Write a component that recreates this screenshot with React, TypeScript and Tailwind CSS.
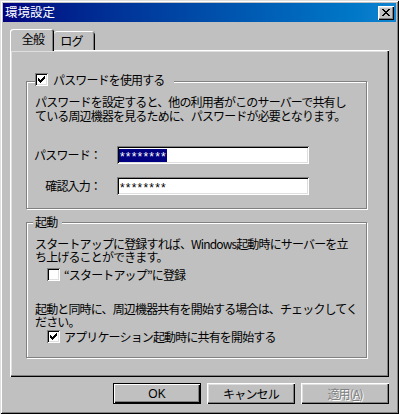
import React from 'react'

const CHECK = [
  '......#',
  '.....##',
  '#...###',
  '##.###.',
  '#####..',
  '.###...',
  '..#....',
]

const CLOSE = [
  '##....##',
  '.##..##.',
  '..####..',
  '...##...',
  '..####..',
  '.##..##.',
  '##....##',
]

function Pixels({ rows, color = '#000' }: { rows: string[]; color?: string }) {
  const w = rows[0].length
  const h = rows.length
  return (
    <svg width={w} height={h} viewBox={`0 0 ${w} ${h}`} shapeRendering="crispEdges">
      {rows.flatMap((row, y) =>
        row.split('').map((c, x) =>
          c === '#' ? <rect key={`${x}-${y}`} x={x} y={y} width={1} height={1} fill={color} /> : null
        )
      )}
    </svg>
  )
}

function Checkbox({ checked }: { checked?: boolean }) {
  return (
    <span className="w-[13px] h-[13px] shrink-0 bg-white flex items-center justify-center shadow-[inset_1px_1px_0_#808080,inset_-1px_-1px_0_#fff,inset_2px_2px_0_#000,inset_-2px_-2px_0_#dfdfdf]">
      {checked && <Pixels rows={CHECK} />}
    </span>
  )
}

// one row per line of the label
function Lines({ lines, lh }: { lines: string[]; lh: string }) {
  return (
    <div className="flex flex-col">
      {lines.map((l) => (
        <div key={l} className={`${lh} whitespace-nowrap`}>
          {l}
        </div>
      ))}
    </div>
  )
}

const raised =
  'shadow-[inset_1px_1px_0_#fff,inset_-1px_-1px_0_#000,inset_-2px_-2px_0_#808080,inset_2px_2px_0_#dfdfdf]'

const sunken =
  'shadow-[inset_1px_1px_0_#808080,inset_-1px_-1px_0_#fff,inset_2px_2px_0_#000,inset_-2px_-2px_0_#dfdfdf]'

export default function App() {
  return (
    <div className="w-[399px] h-[414px] bg-[#c0c0c0] p-[3px] flex flex-col font-['Noto_Sans_CJK_JP','Noto_Sans',sans-serif] text-[12px] tracking-[-0.85px] text-black shadow-[inset_1px_1px_0_#dfdfdf,inset_-1px_-1px_0_#000,inset_2px_2px_0_#fff,inset_-2px_-2px_0_#808080]">
      {/* TITLE */}
      <div className="h-[19px] shrink-0 flex items-center justify-between bg-gradient-to-r from-[#000080] to-[#1084d0] pl-[2px] pr-[2px]">
        <span className="text-white tracking-normal leading-none text-[12.5px]">環境設定</span>
        <span className={`w-[16px] h-[14px] bg-[#c0c0c0] flex items-center justify-center ${raised}`}>
          <Pixels rows={CLOSE} />
        </span>
      </div>

      {/* TABS */}
      <div className="mt-[7px] mx-[7px] flex flex-col">
        <div className="h-[21px] flex items-end relative z-10">
          <div className="w-[44px] h-[22px] -mb-[1px] bg-[#c0c0c0] rounded-t-[3px] flex justify-center pt-[3px] shadow-[inset_1px_1px_0_#fff,inset_-1px_0_0_#000,inset_-2px_0_0_#808080]">
            <span className="leading-[14px] pl-[2px]">全般</span>
          </div>
          <div className="w-[41px] h-[19px] bg-[#c0c0c0] rounded-t-[3px] flex justify-center pt-[3px] shadow-[inset_0_1px_0_#fff,inset_-1px_0_0_#000,inset_-2px_0_0_#808080]">
            <span className="leading-[14px] pr-[6px]">ログ</span>
          </div>
        </div>

        {/* PANEL */}
        <div className={`h-[327px] pl-[16px] pr-[22px] pt-[31px] flex flex-col ${raised}`}>
          {/* PASSWORD GROUP */}
          <div className="h-[128px] border border-[#808080] shadow-[inset_1px_1px_0_#fff,1px_1px_0_#fff] flex flex-col">
            <div className="-mt-[9px] ml-[8px] self-start flex items-center gap-[5px] bg-[#c0c0c0] pr-[9px] h-[13px]">
              <Checkbox checked />
              <span className="leading-[13px] whitespace-nowrap">パスワードを使用する</span>
            </div>
            <div className="mt-[9px] ml-[8px]">
              <Lines
                lh="h-[14px] leading-[14px]"
                lines={[
                  'パスワードを設定すると、他の利用者がこのサーバーで共有し',
                  'ている周辺機器を見るために、パスワードが必要となります。',
                ]}
              />
            </div>
            <div className="mt-[23px] flex items-center">
              <span className="w-[90px] pr-[16px] text-right whitespace-nowrap">パスワード：</span>
              <div className={`w-[192px] h-[18px] bg-white flex items-center pl-[2px] ${sunken}`}>
                <span className="bg-[#000080] text-white h-[13px] flex items-center font-['Liberation_Sans',sans-serif] text-[12px] tracking-[1.2px] leading-none pt-[3px] pl-[1px]">
                  ********
                </span>
              </div>
            </div>
            <div className="mt-[13px] flex items-center">
              <span className="w-[90px] pr-[16px] text-right whitespace-nowrap">確認入力：</span>
              <div className={`w-[192px] h-[18px] bg-white flex items-center pl-[2px] ${sunken}`}>
                <span className="h-[13px] flex items-center font-['Liberation_Sans',sans-serif] text-[12px] tracking-[1.2px] leading-none pt-[3px] pl-[1px]">
                  ********
                </span>
              </div>
            </div>
          </div>

          {/* STARTUP GROUP */}
          <div className="mt-[13px] h-[136px] border border-[#808080] shadow-[inset_1px_1px_0_#fff,1px_1px_0_#fff] flex flex-col">
            <div className="-mt-[8px] ml-[6px] self-start bg-[#c0c0c0] pl-[2px] pr-[5px] h-[14px] flex items-center">
              <span className="leading-[14px]">起動</span>
            </div>
            <div className="mt-[8px] ml-[8px]">
              <Lines
                lh="h-[13px] leading-[13px]"
                lines={[
                  'スタートアップに登録すれば、Windows起動時にサーバーを立',
                  'ち上げることができます。',
                ]}
              />
            </div>
            <div className="mt-[5px] ml-[20px] flex items-center gap-[4px] h-[13px]">
              <Checkbox />
              <span className="leading-[13px] whitespace-nowrap">“スタートアップ”に登録</span>
            </div>
            <div className="mt-[21px] ml-[8px]">
              <Lines
                lh="h-[13px] leading-[13px]"
                lines={[
                  '起動と同時に、周辺機器共有を開始する場合は、チェックしてく',
                  'ださい。',
                ]}
              />
            </div>
            <div className="mt-[2px] ml-[20px] flex items-center gap-[4px] h-[13px]">
              <Checkbox checked />
              <span className="leading-[13px] whitespace-nowrap">アプリケーション起動時に共有を開始する</span>
            </div>
          </div>
        </div>
      </div>

      {/* BUTTONS */}
      <div className="mt-[6px] mr-[7px] flex justify-end gap-[6px]">
        <button className="w-[88px] h-[21px] bg-[#c0c0c0] border border-black flex items-center justify-center shadow-[inset_1px_1px_0_#fff,inset_-1px_-1px_0_#000,inset_-2px_-2px_0_#808080]">
          <span className="font-['Liberation_Sans',sans-serif] tracking-normal leading-none">OK</span>
        </button>
        <button className={`w-[88px] h-[21px] bg-[#c0c0c0] flex items-center justify-center ${raised}`}>
          <span className="leading-none">キャンセル</span>
        </button>
        <button className={`w-[88px] h-[21px] bg-[#c0c0c0] flex items-center justify-center ${raised}`}>
          <span className="leading-none text-[#808080] [text-shadow:1px_1px_0_#fff]">
            適用(<span className="underline">A</span>)
          </span>
        </button>
      </div>
    </div>
  )
}
